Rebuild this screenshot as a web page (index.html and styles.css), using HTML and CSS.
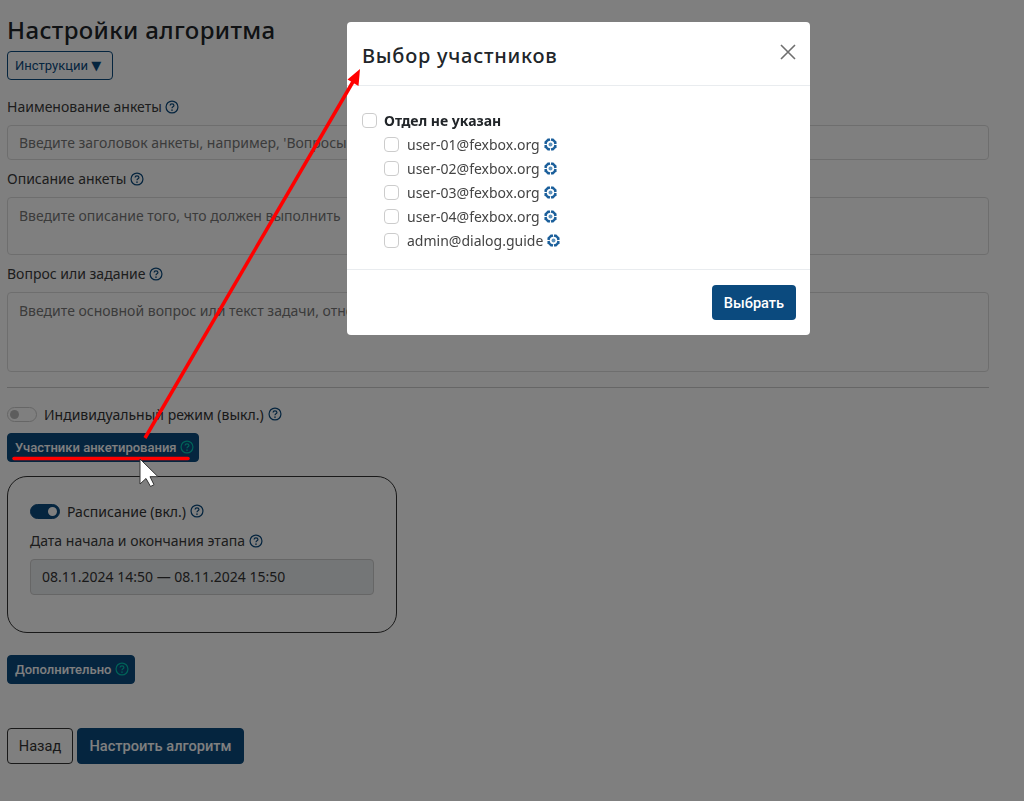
FILE: index.html
```html
<!DOCTYPE html>
<html lang="ru">
<head>
    <meta charset="UTF-8">
    <title>Настройки алгоритма</title>
    <link rel="stylesheet" href="styles.css">
</head>
<body>
    <svg class="icon-defs" width="0" height="0">
        <symbol id="help" viewBox="0 0 16 16">
            <circle cx="8" cy="8" r="6.8" fill="none" stroke="currentColor" stroke-width="1.4"/>
            <path d="M5.8 6.300c0-1.300 1-2 2.200-2s2.200.8 2.200 1.900c0 1.600-2.200 1.600-2.200 3.200" fill="none" stroke="currentColor" stroke-width="1.4"/>
            <circle cx="8" cy="11.600" r=".9" fill="currentColor"/>
        </symbol>
        <symbol id="badge" viewBox="0 0 14 14">
            <path d="M4 .5h6L13.500 4v6L10 13.500H4L.5 10V4z" fill="#1b5f9b"/>
            <circle cx="7" cy="7" r="4" fill="#fff"/>
            <circle cx="7" cy="7" r="2.100" fill="#5f93bd"/>
            <path d="M7 0v3M7 11v3M0 7h3M11 7h3" stroke="#fff" stroke-width="1.100"/>
        </symbol>
    </svg>

    <div class="page">
        <h1>Настройки алгоритма</h1>
        <button class="btn btn-outline btn-small">Инструкции <span class="caret">▼</span></button>

        <div class="form-group first">
            <label>Наименование анкеты <svg class="help"><use href="#help"/></svg></label>
            <div class="field field-input">Введите заголовок анкеты, например, 'Вопросы</div>
        </div>
        <div class="form-group">
            <label>Описание анкеты <svg class="help"><use href="#help"/></svg></label>
            <div class="field field-desc">Введите описание того, что должен выполнить</div>
        </div>
        <div class="form-group">
            <label>Вопрос или задание <svg class="help"><use href="#help"/></svg></label>
            <div class="field field-task">Введите основной вопрос или текст задачи, относительно которой участники</div>
        </div>

        <hr class="divider">

        <div class="switch-row">
            <span class="switch"></span>
            <span>Индивидуальный режим (выкл.)</span>
            <svg class="help"><use href="#help"/></svg>
        </div>
        <button class="btn btn-primary btn-small btn-members">Участники анкетирования <svg class="help help-teal"><use href="#help"/></svg></button>

        <div class="schedule-card">
            <div class="switch-row">
                <span class="switch switch-on"></span>
                <span>Расписание (вкл.)</span>
                <svg class="help"><use href="#help"/></svg>
            </div>
            <label class="date-label">Дата начала и окончания этапа <svg class="help"><use href="#help"/></svg></label>
            <div class="field field-date">08.11.2024 14:50 — 08.11.2024 15:50</div>
        </div>

        <button class="btn btn-primary btn-small btn-extra">Дополнительно <svg class="help help-teal"><use href="#help"/></svg></button>

        <div class="actions">
            <button class="btn btn-outline-dark btn-large">Назад</button>
            <button class="btn btn-primary btn-large btn-submit">Настроить алгоритм</button>
        </div>
    </div>

    <div class="backdrop"></div>

    <div class="modal">
        <div class="modal-header">
            <h2>Выбор участников</h2>
            <svg class="close" viewBox="0 0 16 16"><path d="M1 1l14 14M15 1L1 15" stroke="#6f6f6f" stroke-width="1.6" fill="none"/></svg>
        </div>
        <div class="modal-body">
            <div class="check-row dept"><span class="checkbox"></span><b>Отдел не указан</b></div>
            <div class="check-row user"><span class="checkbox"></span>user-01@fexbox.org <svg class="badge"><use href="#badge"/></svg></div>
            <div class="check-row user"><span class="checkbox"></span>user-02@fexbox.org <svg class="badge"><use href="#badge"/></svg></div>
            <div class="check-row user"><span class="checkbox"></span>user-03@fexbox.org <svg class="badge"><use href="#badge"/></svg></div>
            <div class="check-row user"><span class="checkbox"></span>user-04@fexbox.org <svg class="badge"><use href="#badge"/></svg></div>
            <div class="check-row user"><span class="checkbox"></span>admin@dialog.guide <svg class="badge"><use href="#badge"/></svg></div>
        </div>
        <div class="modal-footer">
            <button class="btn btn-modal">Выбрать</button>
        </div>
    </div>

    <svg class="annotation" width="1024" height="801" viewBox="0 0 1024 801">
        <path d="M145 438L354 80" stroke="#f00" stroke-width="3.500" fill="none"/>
        <path d="M360 69l-1.500 17-11-6.500z" fill="#f00"/>
        <path d="M14 458.500H188" stroke="#f00" stroke-width="3.500" stroke-linecap="round" fill="none"/>
        <path d="M140 459v25l6-5.500 4.500 8 3.500-1.800-4-8h8z" fill="#fff" stroke="#333" stroke-width="1"/>
    </svg>
</body>
</html>
```

FILE: styles.css
```css
* {
    box-sizing: border-box;
}

body {
    margin: 0;
    background: #fff;
    color: #333;
    font-family: "Noto Sans", sans-serif;
    font-size: 14px;
    overflow: hidden;
}

.icon-defs {
    position: absolute;
}

.page {
    padding: 15px 35px 0 7px;
    height: 801px;
}

h1 {
    margin: 0;
    height: 36px;
    font-size: 24px;
    line-height: 30px;
    font-weight: 500;
    letter-spacing: 0.37px;
    color: #212529;
}

label {
    display: block;
    height: 18px;
    line-height: 18px;
    font-size: 14px;
    color: #3a3a3a;
}

.help {
    width: 14px;
    height: 14px;
    vertical-align: -2px;
    color: #0b4a7e;
}

.help-teal {
    color: #00c4b0;
}

.btn {
    display: block;
    border-radius: 4px;
    font-family: Roboto, "Noto Sans", sans-serif;
    cursor: pointer;
    white-space: nowrap;
}

.btn-small {
    height: 29px;
    padding: 0 7px;
    font-size: 13px;
    font-weight: 500;
    text-align: left;
}

.caret {
    font-family: "DejaVu Sans", sans-serif;
    font-size: 13px;
}

.btn-outline {
    width: 106px;
    border: 1px solid #0b4a7e;
    background: #fff;
    color: #0b4a7e;
    font-weight: 400;
}

.btn-primary {
    border: 1px solid #0b4a7e;
    background: #0b4a7e;
    color: #fff;
}

.btn-large {
    height: 36px;
    font-size: 14.6px;
    font-weight: 500;
}

.btn-outline-dark {
    width: 66px;
    padding: 0;
    border: 1px solid #333;
    background: #fff;
    color: #333;
    font-weight: 400;
}

.btn-submit {
    width: 167px;
    padding: 0;
}

.form-group {
    margin-top: 10px;
}

.form-group.first {
    margin-top: 18px;
}

.form-group label {
    margin-bottom: 9px;
}

.field {
    border: 1px solid #ddd;
    border-radius: 4px;
    padding: 0 11px;
    color: #777;
    font-size: 14px;
}

.field-input {
    height: 35px;
    line-height: 33px;
}

.field-desc {
    height: 58px;
    padding-top: 8px;
    line-height: 20px;
}

.field-task {
    height: 80px;
    padding-top: 8px;
    line-height: 20px;
}

.divider {
    margin: 15px 0 16px;
    border: 0;
    border-top: 1px solid #ccc;
}

.switch-row {
    display: flex;
    align-items: center;
    gap: 7px;
    height: 20px;
}

.switch-row .help {
    margin-left: -3px;
}

.switch {
    width: 30px;
    height: 15px;
    border: 1px solid #ccc;
    border-radius: 8px;
    position: relative;
}

.switch::after {
    content: "";
    position: absolute;
    left: 2px;
    top: 2px;
    width: 9px;
    height: 9px;
    border-radius: 50%;
    background: #bbb;
}

.switch-on {
    background: #0b4a7e;
    border-color: #0b4a7e;
}

.switch-on::after {
    left: 17px;
    background: #fff;
}

.btn-members {
    width: 192px;
    margin-top: 9px;
}

.schedule-card {
    width: 390px;
    height: 157px;
    margin-top: 14px;
    padding: 24px 22px 0;
    border: 1px solid #333;
    border-radius: 20px;
}

.date-label {
    margin-top: 11px;
}

.field-date {
    height: 36px;
    margin-top: 9px;
    line-height: 34px;
    background: #e9ecef;
    border-color: #ccc;
    color: #333;
}

.btn-extra {
    width: 128px;
    margin-top: 22px;
}

.actions {
    display: flex;
    gap: 4px;
    margin-top: 44px;
}

.backdrop {
    position: fixed;
    inset: 0;
    background: rgba(0, 0, 0, 0.5);
}

.modal {
    position: fixed;
    left: 347px;
    top: 22px;
    width: 463px;
    height: 313px;
    background: #fff;
    border-radius: 4px;
    display: flex;
    flex-direction: column;
}

.modal-header {
    height: 64px;
    padding: 0 14px 0 15px;
    border-bottom: 1px solid #e9ecef;
    display: flex;
    justify-content: space-between;
    align-items: center;
}

.modal-header h2 {
    margin: 3px 0 0;
    font-size: 20px;
    font-weight: 500;
    letter-spacing: 0.75px;
    color: #212529;
}

.close {
    width: 16px;
    height: 16px;
    margin: 0 0 3px;
}

.modal-body {
    flex: 1;
    padding: 22px 15px 0;
}

.check-row {
    display: flex;
    align-items: center;
    height: 24px;
    color: #444;
    font-size: 14px;
}

.check-row b {
    font-weight: 700;
    color: #212529;
}

.checkbox {
    width: 15px;
    height: 15px;
    margin-right: 7px;
    border: 1px solid #ccc;
    border-radius: 4px;
    flex: none;
}

.user .checkbox {
    margin-right: 8px;
}

.user {
    padding-left: 22px;
}

.badge {
    width: 13px;
    height: 13px;
    margin-left: 4px;
}

.modal-footer {
    height: 66px;
    padding: 15px 14px 0 0;
    border-top: 1px solid #e9ecef;
    display: flex;
    justify-content: flex-end;
}

.btn-modal {
    width: 84px;
    height: 35px;
    border: 0;
    background: #0b4a7e;
    color: #fff;
    font-size: 14.6px;
    font-weight: 500;
}

.annotation {
    position: fixed;
    left: 0;
    top: 0;
}
```
